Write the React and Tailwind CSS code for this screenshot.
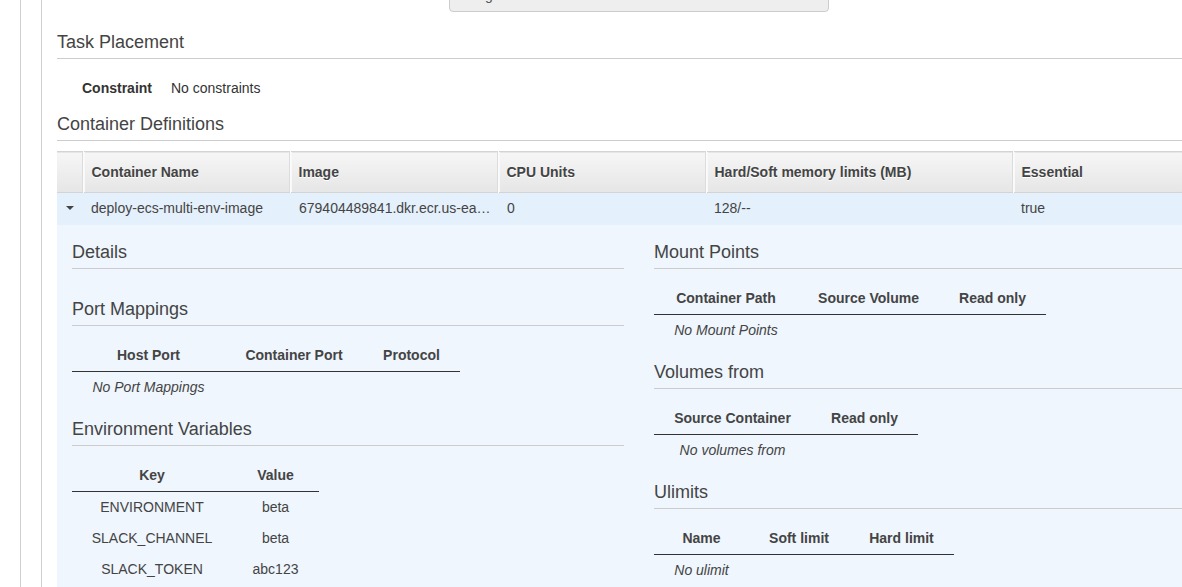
import React from 'react'

const font = "font-['Liberation_Sans',Arial,sans-serif]"

const SectionHeading = ({ children }) => (
  <h3 className="text-[18px] leading-[20px] font-normal text-[#444] pb-[6px] border-b border-[#ccc]">{children}</h3>
)

const MiniTable = ({ cols, rows, empty }) => (
  <table className="mt-[19px] table-fixed border-collapse text-[14px] text-[#444]">
    <colgroup>
      {cols.map((c) => (
        <col key={c.label} style={{ width: c.w }} />
      ))}
    </colgroup>
    <thead>
      <tr className="border-b border-[#333]">
        {cols.map((c) => (
          <th key={c.label} className="p-0 pb-[6px] leading-[20px] font-bold text-center whitespace-nowrap">{c.label}</th>
        ))}
      </tr>
    </thead>
    <tbody>
      {rows.length === 0 ? (
        <tr>
          <td className="p-0 pt-[5px] pb-[6px] leading-[20px] text-center italic whitespace-nowrap">{empty}</td>
          {cols.slice(1).map((c) => (
            <td key={c.label} />
          ))}
        </tr>
      ) : (
        rows.map((r) => (
          <tr key={r[0]}>
            {r.map((v, i) => (
              <td key={i} className="p-0 pt-[5px] pb-[6px] leading-[20px] text-center whitespace-nowrap">{v}</td>
            ))}
          </tr>
        ))
      )}
    </tbody>
  </table>
)

const Section = ({ title, first, children }) => (
  <div className={first ? '' : 'mt-[16px]'}>
    <SectionHeading>{title}</SectionHeading>
    {children}
  </div>
)

const App = () => {
  const headers = ['Container Name', 'Image', 'CPU Units', 'Hard/Soft memory limits (MB)', 'Essential']

  return (
    <div className={`flex h-screen w-[1182px] overflow-hidden bg-white ${font}`}>
      {/* left rails */}
      <div className="w-[21px] shrink-0 border-r border-[#d0d0d0]" />
      <div className="w-[21px] shrink-0 border-r border-[#d0d0d0]" />

      {/* Main content */}
      <div className="w-[1164px] shrink-0 ml-[15px]">
        {/* cut-off form row */}
        <div className="flex items-center h-[34px] mt-[-22px]">
          <div className="w-[392px] text-right pr-[16px] text-[14px] leading-[20px] font-bold text-[#333]">Network mode</div>
          <div className="w-[380px] h-[34px] rounded-[4px] border border-[#ccc] bg-[#eee] px-[10px] flex items-center text-[14px] text-[#555]">Bridge</div>
        </div>

        <div className="mt-[20px]">
          <SectionHeading>Task Placement</SectionHeading>
        </div>
        <div className="flex mt-[19px] pl-[25px] text-[14px] leading-[20px] text-[#333]">
          <span className="font-bold w-[89px]">Constraint</span>
          <span>No constraints</span>
        </div>

        <div className="mt-[16px]">
          <SectionHeading>Container Definitions</SectionHeading>
        </div>

        {/* Container table */}
        <table className="mt-[10px] w-[1164px] table-fixed border-collapse text-[14px] text-[#444]">
          <colgroup>
            <col className="w-[26px]" />
            <col className="w-[207px]" />
            <col className="w-[208px]" />
            <col className="w-[208px]" />
            <col className="w-[307px]" />
            <col className="w-[208px]" />
          </colgroup>
          <thead>
            <tr className="h-[41px] bg-gradient-to-b from-[#f6f6f6] to-[#e6e6e6] border-t border-b border-[#d4d4d4]">
              <th className="p-0" />
              {headers.map((h) => (
                <th
                  key={h}
                  className="px-[8px] text-left font-bold leading-[20px] border-l border-[#fbfbfb] shadow-[inset_1px_0_0_#f9f9f9,-1px_0_0_#dcdcdc] [text-shadow:0_1px_0_#fff]"
                >
                  {h}
                </th>
              ))}
            </tr>
          </thead>
          <tbody>
            <tr className="h-[32px] bg-[#e4f0fb] leading-[20px]">
              <td className="p-0 pb-[2px]">
                <svg width="26" height="10" viewBox="0 0 26 10" className="block">
                  <polygon points="9,3 17,3 13,7" fill="#444" />
                </svg>
              </td>
              <td className="px-[8px] pb-[2px] whitespace-nowrap">deploy-ecs-multi-env-image</td>
              <td className="pl-[9px] pr-[8px] pb-[2px] whitespace-nowrap">679404489841.dkr.ecr.us-ea…</td>
              <td className="pl-[9px] pr-[8px] pb-[2px]">0</td>
              <td className="px-[8px] pb-[2px]">128/--</td>
              <td className="px-[8px] pb-[2px]">true</td>
            </tr>
          </tbody>
        </table>

        {/* Expanded details */}
        <div className="bg-[#eff6fd] px-[15px] pt-[17px] pb-[40px] grid grid-cols-2 gap-x-[30px]">
          <div>
            <Section title="Details" first>
              <div className="h-[14px]" />
            </Section>
            <Section title="Port Mappings">
              <MiniTable
                cols={[{ label: 'Host Port', w: 153 }, { label: 'Container Port', w: 138 }, { label: 'Protocol', w: 97 }]}
                rows={[]}
                empty="No Port Mappings"
              />
            </Section>
            <Section title="Environment Variables">
              <MiniTable
                cols={[{ label: 'Key', w: 160 }, { label: 'Value', w: 87 }]}
                rows={[
                  ['ENVIRONMENT', 'beta'],
                  ['SLACK_CHANNEL', 'beta'],
                  ['SLACK_TOKEN', 'abc123'],
                ]}
              />
            </Section>
          </div>
          <div>
            <Section title="Mount Points" first>
              <MiniTable
                cols={[{ label: 'Container Path', w: 144 }, { label: 'Source Volume', w: 141 }, { label: 'Read only', w: 107 }]}
                rows={[]}
                empty="No Mount Points"
              />
            </Section>
            <Section title="Volumes from">
              <MiniTable
                cols={[{ label: 'Source Container', w: 157 }, { label: 'Read only', w: 107 }]}
                rows={[]}
                empty="No volumes from"
              />
            </Section>
            <Section title="Ulimits">
              <MiniTable
                cols={[{ label: 'Name', w: 95 }, { label: 'Soft limit', w: 100 }, { label: 'Hard limit', w: 105 }]}
                rows={[]}
                empty="No ulimit"
              />
            </Section>
          </div>
        </div>
      </div>
    </div>
  )
}

export default App
